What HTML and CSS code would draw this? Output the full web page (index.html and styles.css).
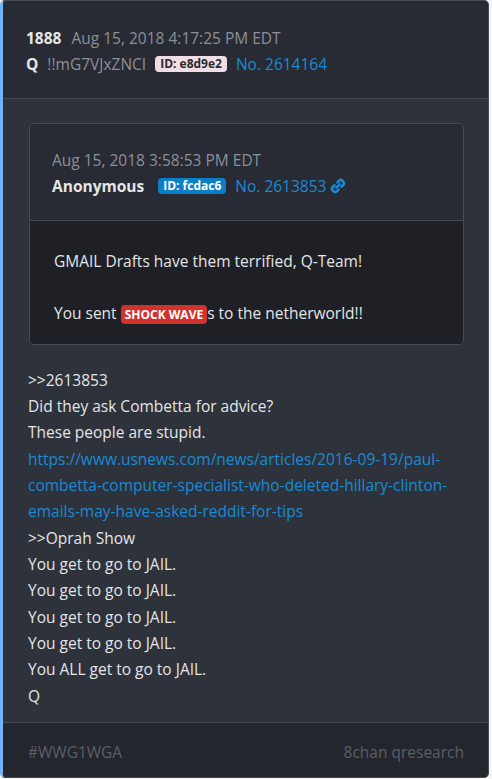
FILE: index.html
```html
<!DOCTYPE html>
<html lang="en">
<head>
    <meta charset="UTF-8">
    <meta name="viewport" content="width=device-width, initial-scale=1.0">
    <title>Q Drop 1888</title>
    <link rel="stylesheet" href="styles.css">
</head>
<body>

<div class="post">
    <div class="post-header">
        <div class="meta-line">
            <span class="drop-num">1888</span>
            <span class="date">Aug 15, 2018 4:17:25 PM EDT</span>
        </div>
        <div class="meta-line">
            <span class="name">Q</span>
            <span class="trip">!!mG7VJxZNCI</span>
            <span class="badge badge-q">ID: e8d9e2</span>
            <a class="post-no" href="#">No. 2614164</a>
        </div>
    </div>

    <div class="post-body">
        <div class="quote">
            <div class="quote-header">
                <div class="meta-line">
                    <span class="date">Aug 15, 2018 3:58:53 PM EDT</span>
                </div>
                <div class="meta-line">
                    <span class="name anon">Anonymous</span>
                    <span class="badge badge-anon">ID: fcdac6</span>
                    <a class="post-no" href="#">No. 2613853
                        <svg class="link-icon" viewBox="0 0 16 16" width="16" height="16">
                            <path d="M6.3 9.7 L9.7 6.3" stroke="currentColor" stroke-width="2.4" stroke-linecap="round" fill="none"/>
                            <path d="M7.4 4.4 L8.9 2.9 a2.7 2.7 0 0 1 3.8 0 l0.4 0.4 a2.7 2.7 0 0 1 0 3.8 L11.6 8.6" stroke="currentColor" stroke-width="2.6" stroke-linecap="round" fill="none"/>
                            <path d="M8.6 11.6 L7.1 13.1 a2.7 2.7 0 0 1 -3.8 0 l-0.4 -0.4 a2.7 2.7 0 0 1 0 -3.8 L4.4 7.4" stroke="currentColor" stroke-width="2.6" stroke-linecap="round" fill="none"/>
                        </svg>
                    </a>
                </div>
            </div>
            <div class="quote-text">
                <p>GMAIL Drafts have them terrified, Q-Team!</p>
                <p>You sent <span class="keyword">SHOCK WAVE</span>s to the netherworld!!</p>
            </div>
        </div>

        <div class="drop-text">
            &gt;&gt;2613853<br>
            Did they ask Combetta for advice?<br>
            These people are stupid.<br>
            <a href="#">https://www.usnews.com/news/articles/2016-09-19/paul-combetta-computer-specialist-who-deleted-hillary-clinton-emails-may-have-asked-reddit-for-tips</a><br>
            &gt;&gt;Oprah Show<br>
            You get to go to JAIL.<br>
            You get to go to JAIL.<br>
            You get to go to JAIL.<br>
            You get to go to JAIL.<br>
            You ALL get to go to JAIL.<br>
            Q
        </div>
    </div>

    <div class="post-footer">
        <span>#WWG1WGA</span>
        <span>8chan qresearch</span>
    </div>
</div>

</body>
</html>
```

FILE: styles.css
```css
body {
    margin: 0;
    background-color: #f4f4f4;
    font-family: "Open Sans", "Noto Sans", sans-serif;
    font-size: 15.5px;
    line-height: 26.33px;
    color: #e4e5e7;
}

a {
    color: #1a8ad4;
    text-decoration: none;
}

.post {
    width: 485px;
    background-color: #2e323b;
    border: 1px solid #464b56;
    border-left: 3px solid #72b3f6;
    border-radius: 5px;
    overflow: hidden;
}

.post-header {
    background-color: #282b33;
    padding: 24px 22px 21px 23px;
    border-bottom: 1px solid #444852;
}

.meta-line {
    display: flex;
    align-items: center;
    height: 26px;
}

.drop-num,
.name {
    font-weight: bold;
    color: #e6e6e6;
}

.drop-num {
    margin-right: 10px;
}

.name {
    margin-right: 9px;
}

.name.anon {
    margin-right: 14px;
}

.date,
.trip {
    color: #8b9099;
}

.trip {
    margin-right: 9px;
}

.badge {
    font-size: 12px;
    font-weight: bold;
    line-height: 16px;
    padding: 0 5px;
    border-radius: 4px;
    margin-right: 9px;
}

.badge-q {
    background-color: #f1dde5;
    color: #2b2b2b;
}

.badge-anon {
    background-color: #0b7ec6;
    color: #ffffff;
}

.post-no {
    display: flex;
    align-items: center;
    gap: 4px;
}

.link-icon {
    display: block;
}

.post-body {
    padding: 24px 24px 13px 25px;
}

.quote {
    margin-left: 1px;
    border: 1px solid #464b56;
    border-radius: 5px;
    overflow: hidden;
}

.quote-header {
    background-color: #282b33;
    padding: 23px 22px 21px;
    border-bottom: 1px solid #444852;
}

.quote-text {
    background-color: #1e2026;
    padding: 27px 24px 15px;
}

.quote-text p {
    margin: 0 0 26px;
}

.quote-text p:last-child {
    margin-bottom: 0;
}

.keyword {
    background-color: #d3322c;
    color: #ffffff;
    font-size: 12px;
    font-weight: bold;
    padding: 1px 4px;
    border-radius: 4px;
}

.drop-text {
    margin-top: 22px;
}

.post-footer {
    display: flex;
    justify-content: space-between;
    background-color: #23262d;
    border-top: 1px solid #444852;
    padding: 16px 24px 12px 25px;
    color: #5a5f69;
}
```
